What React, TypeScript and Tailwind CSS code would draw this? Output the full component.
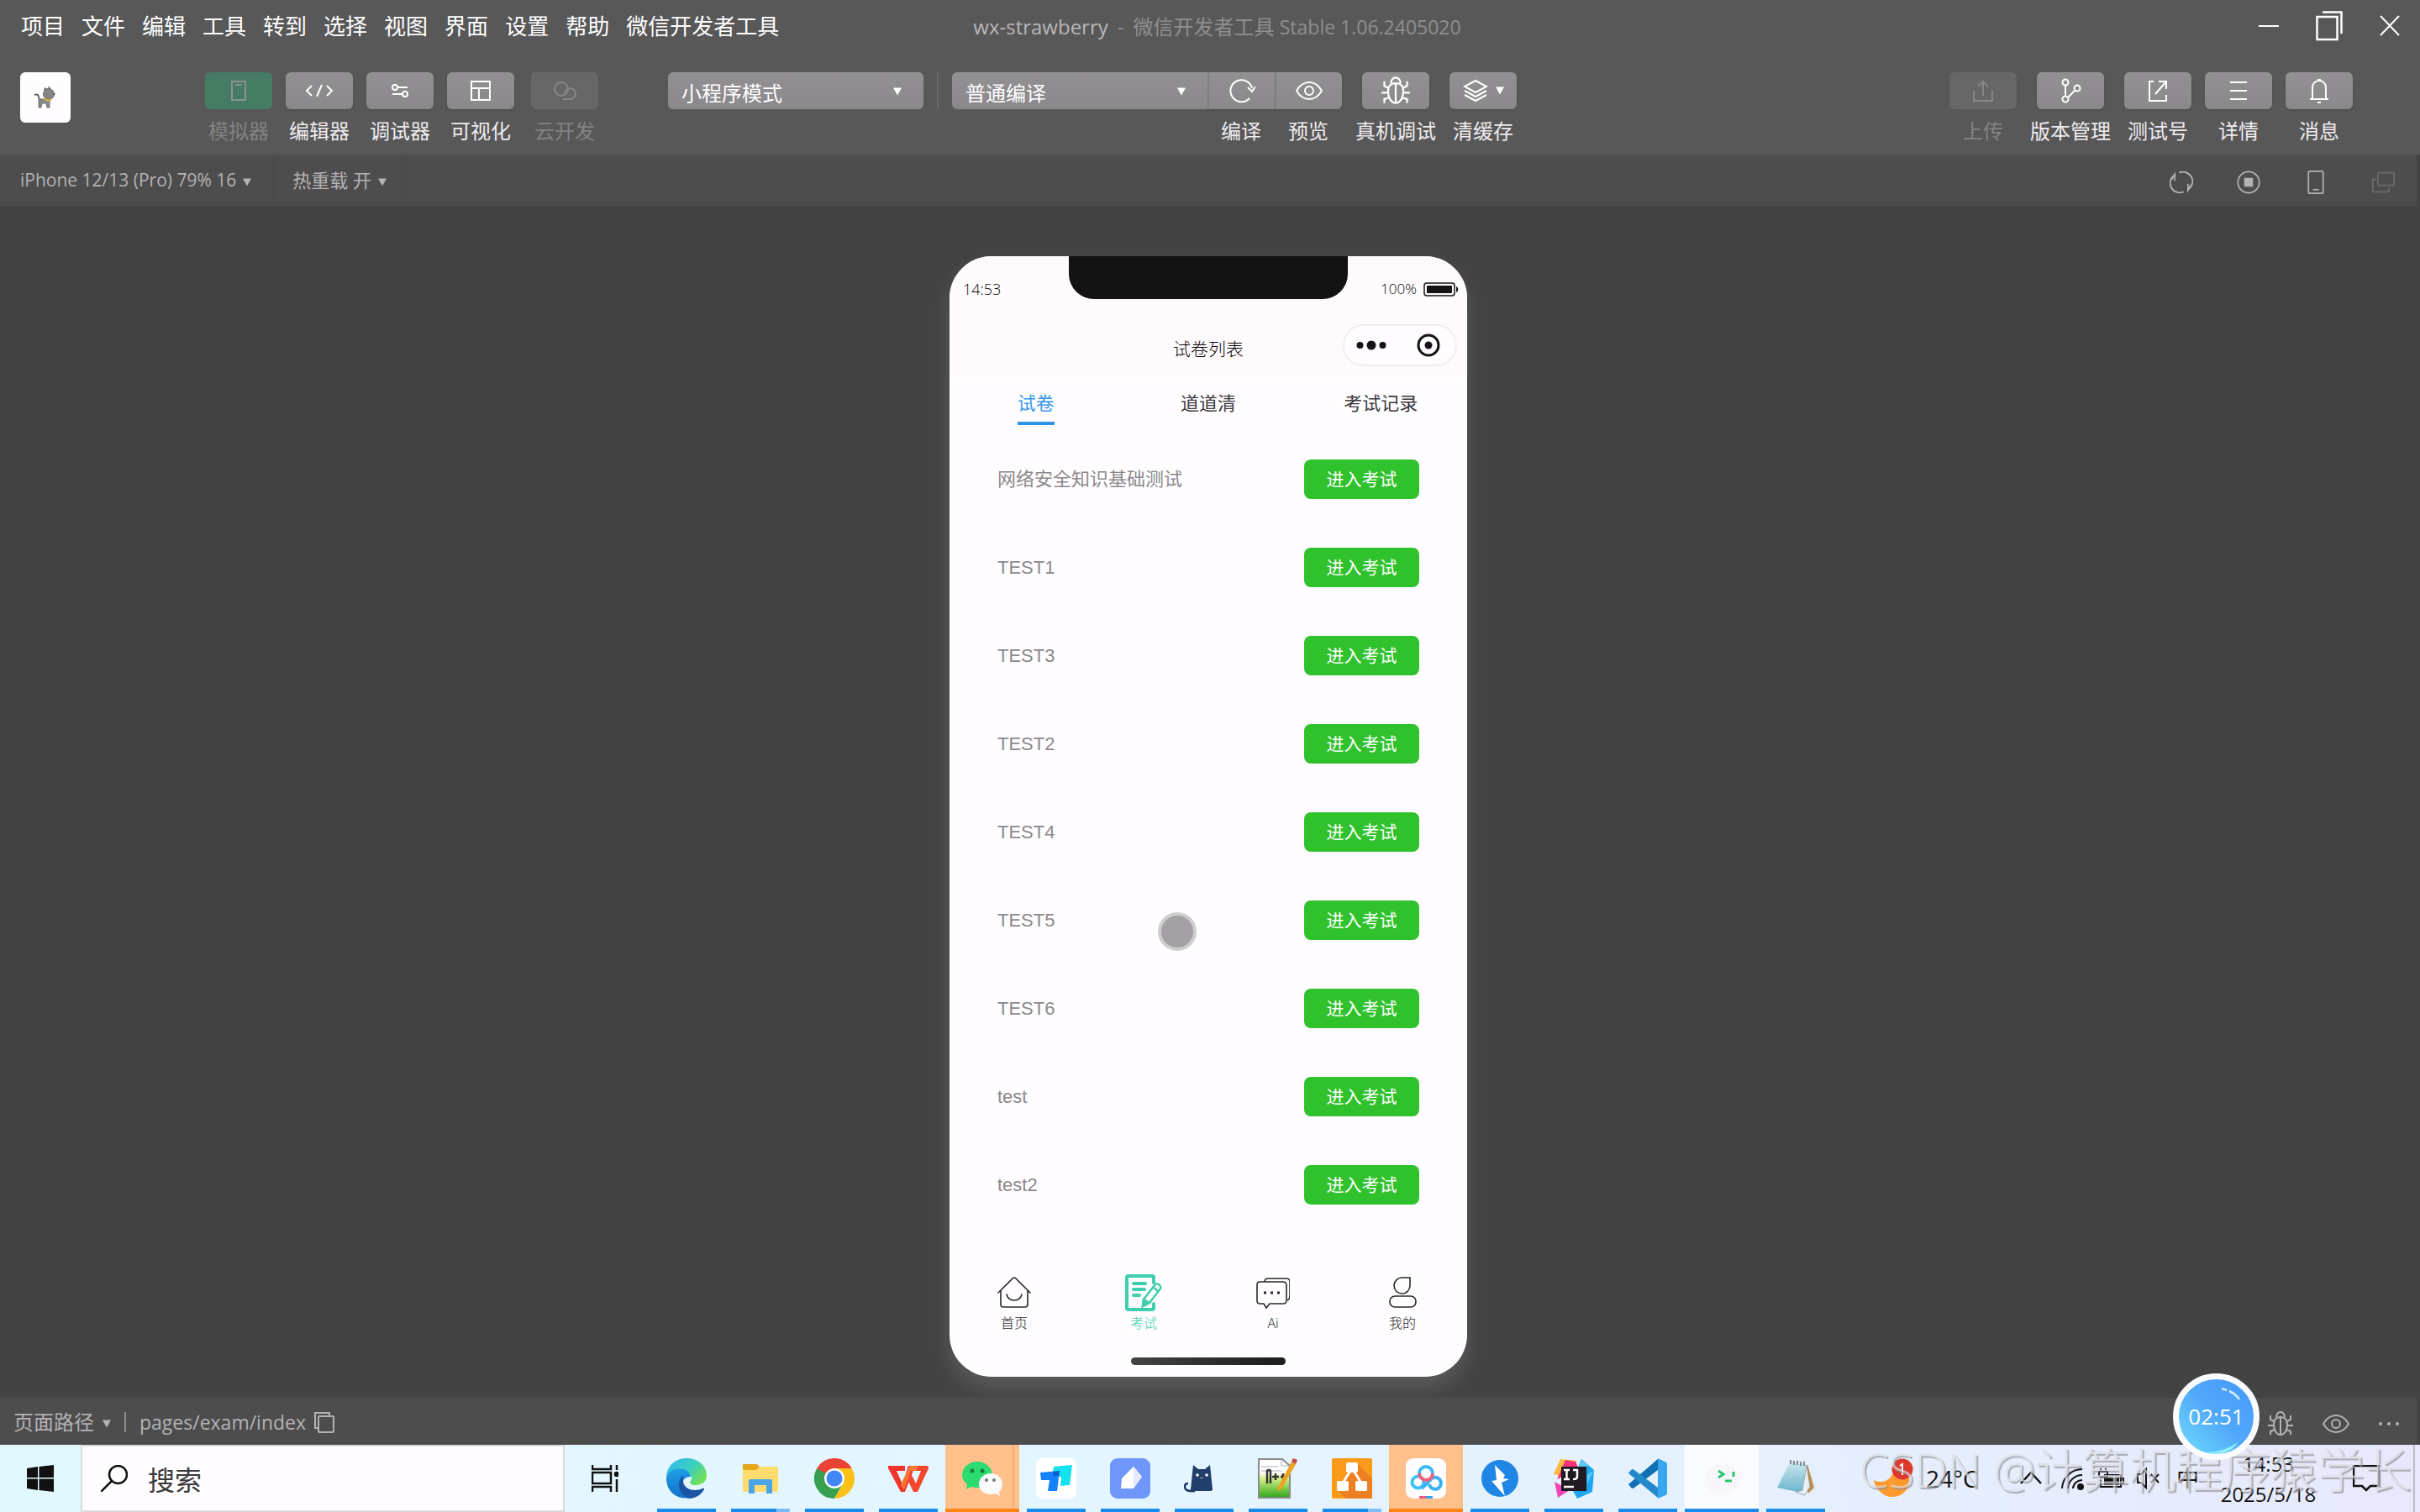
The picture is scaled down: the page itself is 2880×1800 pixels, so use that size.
import type { ReactNode } from "react";

const UI = "font-['Open_Sans','Noto_Sans_CJK_SC',sans-serif]";
const APP = "font-['Liberation_Sans','Noto_Sans_CJK_SC',sans-serif]";

const MENUS = ["项目", "文件", "编辑", "工具", "转到", "选择", "视图", "界面", "设置", "帮助", "微信开发者工具"];
const EXAMS = ["网络安全知识基础测试", "TEST1", "TEST3", "TEST2", "TEST4", "TEST5", "TEST6", "test", "test2"];

type SvgProps = { size?: string; box?: string; width?: number; className?: string; children: ReactNode };

function Line({ size = "w-8 h-8", box = "0 0 32 32", width = 2, className = "", children }: SvgProps) {
  return (
    <svg viewBox={box} className={`${size} ${className} shrink-0`} fill="none" stroke="currentColor" strokeWidth={width} aria-hidden="true">
      {children}
    </svg>
  );
}

function Caret({ className = "" }: { className?: string }) {
  return (
    <svg viewBox="0 0 11 10" className={`h-2.5 w-2.5 shrink-0 ${className}`} aria-hidden="true">
      <path d="M0 0h11L5.500 10z" fill="currentColor" />
    </svg>
  );
}

function Bug({ size = "w-8 h-8" }: { size?: string }) {
  return (
    <Line size={size}>
      <path d="M11 8a5 6 0 0 1 10 0M8 17c0-6 2-9 8-9s8 3 8 9-3 12-8 12-8-6-8-12zM16 8v21M8 13l-4-2V6M24 13l4-2V6M8 18H1M24 18h7M9 23l-5 2v4M23 23l5 2v4" />
    </Line>
  );
}

function Eye({ size = "w-8 h-8" }: { size?: string }) {
  return (
    <Line size={size}>
      <path d="M1 16C5 9 10 6 16 6s11 3 15 10c-4 7-9 10-15 10S5 23 1 16z" />
      <circle cx="16" cy="16" r="5" />
    </Line>
  );
}

const ic = {
  simulator: <Line><path d="M8 5h16v22H8zM12 9h8" /></Line>,
  code: <Line size="w-9 h-8" box="0 0 36 32"><path d="M9 10l-6 6 6 6M27 10l6 6-6 6M21 9l-6 14" /></Line>,
  debug: <Line><circle cx="10" cy="12" r="3" /><path d="M13 12h12M7 20h12" /><circle cx="22" cy="20" r="3" /></Line>,
  layout: <Line><path d="M5 5h22v22H5zM5 13h22M14 13v14" /></Line>,
  cloud: <Line><circle cx="12" cy="14" r="8" /><path d="M14 26h9a6.500 6.500 0 1 0-4-12l-4 5" /></Line>,
  compile: <Line><path d="M25 25A13 13 0 1 1 28 13M23 12l5 5 4-6" /></Line>,
  layers: <Line><path d="M16 4l13 7-13 7-13-7zM3 16l13 7 13-7M3 21l13 7 13-7" /></Line>,
  upload: <Line><path d="M5 16v12h22V16M16 22V5M10 11l6-6 6 6" /></Line>,
  branch: <Line><circle cx="10" cy="6" r="3.500" /><circle cx="10" cy="26" r="3.500" /><circle cx="24" cy="13" r="3.500" /><path d="M10 10v12M13 24l8-8" /></Line>,
  test: <Line><path d="M11 5H6v23h20v-7M13 20L26 5M17 5h9v9" /></Line>,
  menu: <Line><path d="M6 6h20M6 16h20M6 26h20" /></Line>,
  bell: <Line><path d="M5 26h22M8 26V12a8 8 0 0 1 16 0v14M14 3h4M14 30h4" /></Line>,
};

function Face({ children, tone, shape }: { children: ReactNode; tone: string; shape: string }) {
  const tones: Record<string, string> = {
    normal: "bg-linear-to-b from-[#929093] to-[#8a888b] text-white shadow-sm",
    active: "bg-[#467b64] text-[#8d9490]",
    off: "bg-[#676767] text-[#878787]",
  };
  return <span className={`flex h-11 w-20 items-center justify-center gap-2 ${shape} ${tones[tone]}`}>{children}</span>;
}

function Tool({ label, children, tone = "normal", shape = "rounded-md", className = "" }: { label: string; children: ReactNode; tone?: string; shape?: string; className?: string }) {
  return (
    <button type="button" className={`flex w-20 flex-col items-center gap-2 ${className}`}>
      <Face tone={tone} shape={shape}>{children}</Face>
      <span className={`text-[24px] leading-9 whitespace-nowrap ${tone === "normal" ? "text-[#efecef]" : "text-[#838383]"}`}>{label}</span>
    </button>
  );
}

function Picker({ label, value, shape = "rounded-md", className }: { label: string; value: string; shape?: string; className: string }) {
  return (
    <div className={`relative ${className}`}>
      <select aria-label={label} className={`h-11 w-full appearance-none bg-linear-to-b from-[#929093] to-[#8a888b] px-4 pt-1.5 text-[24px] leading-8 text-white ${shape}`}>
        <option>{value}</option>
      </select>
      <Caret className="pointer-events-none absolute top-[18px] right-[26px] text-white" />
    </div>
  );
}

function TitleBar() {
  return (
    <header className="flex h-[62px] items-center justify-between">
      <nav className="flex flex-1 items-center gap-5 pl-[25px] text-[26px] leading-9 text-white">
        {MENUS.map((m) => (
          <button type="button" key={m} className="whitespace-nowrap">{m}</button>
        ))}
      </nav>
      <h1 className="flex items-baseline gap-[11px] pt-0.5 pl-4 text-[24px] whitespace-nowrap text-[#8f8f8f]">
        <span className="text-[#b9b7b9]">wx-strawberry</span>
        <span>-</span>
        <span>微信开发者工具 <span className="text-[23px]">Stable 1.06.2405020</span></span>
      </h1>
      <div className="flex flex-1 items-center justify-end gap-11 pr-6 text-white">
        <button type="button" aria-label="最小化"><Line size="w-6 h-8" box="0 0 24 32"><path d="M0 16h24" /></Line></button>
        <button type="button" aria-label="还原"><Line size="w-8 h-10" box="0 0 32 40" width={2.5}><path d="M1.500 9h24v27h-24zM8 3.500h22.500V29" /></Line></button>
        <button type="button" aria-label="关闭"><Line size="w-6 h-7" box="0 0 24 28"><path d="M1 2l22 23M23 2L1 25" /></Line></button>
      </div>
    </header>
  );
}

function Logo() {
  return (
    <button type="button" aria-label="项目头像" className="flex size-15 items-center justify-center rounded-md bg-[#fffdff]">
      <svg viewBox="0 0 28 28" className="size-7" aria-hidden="true">
        <path d="M1 11c5-2 5 2 6 6" fill="none" stroke="#666" strokeWidth="2" />
        <path d="M6 16h13v10h-3l-1-5h-5l-1 5H6z" fill="#8d8b8c" stroke="#5a5859" strokeWidth=".8" />
        <path d="M12 6l1-4 4 2zM17 4l1-4 3 5z" fill="#777" />
        <circle cx="18" cy="10" r="6.500" fill="#868485" stroke="#5a5859" strokeWidth=".8" />
        <path d="M12 15c3 2 6 3 9 2" fill="none" stroke="#e3b941" strokeWidth="2" />
        <circle cx="24.500" cy="10" r="1" fill="#444" />
      </svg>
    </button>
  );
}

function Toolbar() {
  return (
    <div className="flex h-[122px] items-start pt-6 pr-20 pl-6">
      <Logo />
      <div className="ml-40 flex gap-4">
        <Tool label="模拟器" tone="active">{ic.simulator}</Tool>
        <Tool label="编辑器">{ic.code}</Tool>
        <Tool label="调试器">{ic.debug}</Tool>
        <Tool label="可视化">{ic.layout}</Tool>
        <Tool label="云开发" tone="off" className="ml-1">{ic.cloud}</Tool>
      </div>
      <Picker label="项目模式" value="小程序模式" className="ml-[83px] w-[304px]" />
      <span className="mx-4 h-11 w-0.5 bg-[#6c6c6c]" />
      <div className="flex">
        <Picker label="编译模式" value="普通编译" shape="rounded-l-md" className="w-[304px]" />
        <Tool label="编译" shape="border-l-2 border-[#7f7d80]">{ic.compile}</Tool>
        <Tool label="预览" shape="rounded-r-md border-l-2 border-[#7f7d80]"><Eye /></Tool>
      </div>
      <div className="ml-6 flex gap-6">
        <Tool label="真机调试"><Bug size="w-9 h-9" /></Tool>
        <Tool label="清缓存">{ic.layers}<Caret /></Tool>
      </div>
      <div className="ml-auto flex gap-4">
        <Tool label="上传" tone="off">{ic.upload}</Tool>
        <Tool label="版本管理" className="mx-2">{ic.branch}</Tool>
        <Tool label="测试号">{ic.test}</Tool>
        <Tool label="详情">{ic.menu}</Tool>
        <Tool label="消息">{ic.bell}</Tool>
      </div>
    </div>
  );
}

function SimulatorBar() {
  return (
    <div className="flex h-[61px] items-center border-r-4 border-[#434343] bg-[#4d4d4d] text-[22px] text-[#b4b2b4]">
      <button type="button" className="flex h-full items-center gap-2 border-r border-[#484848] pr-[26px] pl-6 text-[21px]">
        iPhone 12/13 (Pro) 79% 16 <Caret className="mt-1" />
      </button>
      <button type="button" className="flex h-full items-center gap-2 border-r border-[#484848] px-[22px]">
        热重载 开 <Caret className="mt-1" />
      </button>
      <div className="ml-auto flex items-center gap-13 pt-1 pr-[26px]">
        <button type="button" aria-label="刷新">
          <Line size="w-7 h-7"><path d="M13 3a13 13 0 0 1 12 23M19 29A13 13 0 0 1 7 6M7 14V5l-4 7M25 18v9l4-7" /></Line>
        </button>
        <button type="button" aria-label="停止">
          <Line size="w-7 h-7"><circle cx="16" cy="16" r="14.500" /><path d="M10 10h12v12H10z" fill="currentColor" stroke="none" /></Line>
        </button>
        <button type="button" aria-label="机型">
          <Line size="w-7 h-7"><rect x="6" y="1" width="20" height="30" rx="2" /><path d="M12 26h8" /></Line>
        </button>
        <button type="button" aria-label="分离窗口" className="text-[#6b6b6b]">
          <Line size="w-7 h-7"><rect x="9" y="3" width="22" height="17" rx="1" /><path d="M7 12H2v17h22v-6" /></Line>
        </button>
      </div>
    </div>
  );
}

function PhoneHeader() {
  return (
    <div className={`flex flex-col bg-[#fffbfd] font-light text-[#0a080a] ${UI}`}>
      <div className="flex h-[78px] items-center justify-between pr-2.5 pl-4 text-[18px]">
        <span>14:53</span>
        <span className="flex items-center gap-2 text-[17px]">
          100%
          <svg viewBox="0 0 42 17" className="h-[17px] w-[42px]" aria-hidden="true">
            <rect x="1" y="1" width="36" height="15" rx="3" fill="none" stroke="#161416" strokeWidth="1.500" />
            <rect x="4" y="4" width="30" height="9" rx="1" fill="#161416" />
            <path d="M39 5c3 1 3 6 0 7z" fill="#161416" />
          </svg>
        </span>
      </div>
      <div className="grid h-[65px] grid-cols-[1fr_auto_1fr] items-start px-3">
        <span />
        <h2 className="pt-4 text-[21px] leading-8">试卷列表</h2>
        <div className="mt-[3px] flex h-[50px] w-[136px] items-center justify-between justify-self-end rounded-full border-2 border-[#f1eff1] bg-[#fffdff] pr-4.5 pl-3.5">
          <button type="button" aria-label="更多">
            <svg viewBox="0 0 36 14" className="h-3.5 w-9" fill="#161416" aria-hidden="true">
              <circle cx="4.500" cy="7" r="4" /><circle cx="18" cy="7" r="5.500" /><circle cx="31.500" cy="7" r="4" />
            </svg>
          </button>
          <button type="button" aria-label="关闭小程序">
            <svg viewBox="0 0 28 28" className="size-7" aria-hidden="true">
              <circle cx="14" cy="14" r="12" fill="none" stroke="#161416" strokeWidth="3" />
              <circle cx="14" cy="14" r="4.500" fill="#161416" />
            </svg>
          </button>
        </div>
      </div>
    </div>
  );
}

function PhoneTabs() {
  return (
    <div role="tablist" className="grid h-[70px] grid-cols-3 items-start justify-items-center pt-[15px] text-[22px] leading-9 text-[#3c3a3c]">
      <button role="tab" aria-selected="true" className="border-b-4 border-[#2f93e8] pb-[3px] text-[#3498ee]">试卷</button>
      <button role="tab" aria-selected="false">道道清</button>
      <button role="tab" aria-selected="false">考试记录</button>
    </div>
  );
}

function PhoneNav() {
  const item = "flex flex-col items-center text-[16px] leading-6";
  return (
    <nav className={`grid grid-cols-4 font-light text-[#2a282a] ${UI}`}>
      <button type="button" className={item}>
        <span className="flex h-12 items-center">
          <Line size="w-10 h-10" box="0 0 40 40" width={1.6}>
            <path d="M1 20L18 3q2-2 4 0l17 17M4 18v16q0 3 3 3h26q3 0 3-3V18M11 22q2 7 9 7t9-7" strokeLinecap="round" />
          </Line>
        </span>
        首页
      </button>
      <button type="button" className={`${item} text-[#3fcfae]`}>
        <span className="flex h-12 items-center">
          <Line size="w-11 h-11" box="0 0 44 44" width={4}>
            <path d="M34 10V4q0-2-2-2H4Q2 2 2 4v36q0 2 2 2h28q2 0 2-2v-5M10 11h14M10 18h13M10 25h7" strokeLinecap="round" />
            <path d="M21 38l1-8 13-17q2-3 5-1t2 5L29 34z" strokeWidth="2.500" />
            <path d="M21 38l1-8 7 4zM33 15l6 5" strokeWidth="2.500" fill="currentColor" />
          </Line>
        </span>
        考试
      </button>
      <button type="button" className={item}>
        <span className="flex h-12 items-center">
          <Line size="w-10 h-10" box="0 0 40 40" width={1.6}>
            <path d="M4 7h28q4 0 4 4v18q0 4-4 4H16l-4 5-3-5H4q-3 0-3-4V11q0-4 3-4zM10 7q0-4 4-4h22q4 0 4 4v17q0 4-3 5" />
            <path d="M9 20h3M17 20h3M25 20h3" strokeWidth="3" />
          </Line>
        </span>
        Ai
      </button>
      <button type="button" className={item}>
        <span className="flex h-12 items-center">
          <Line size="w-10 h-10" box="0 0 40 40" width={1.6}>
            <path d="M29 2v9a9.500 9.500 0 1 1-9-9z" />
            <rect x="5" y="24" width="31" height="13" rx="6" />
          </Line>
        </span>
        我的
      </button>
    </nav>
  );
}

function Phone() {
  return (
    <section className={`relative flex w-[616px] flex-col overflow-hidden rounded-[50px] bg-[#fffdff] shadow-[0_14px_24px_rgba(255,255,255,0.13)] ${APP}`}>
      <div className="absolute top-0 left-1/2 h-[51px] w-[332px] -translate-x-1/2 rounded-b-[30px] bg-[#131313]" />
      <PhoneHeader />
      <PhoneTabs />
      <ul>
        {EXAMS.map((name) => (
          <li key={name} className="flex h-[105px] items-center justify-between pr-[57px] pl-[57px] text-[22px] text-[#8b898b]">
            {name}
            <button type="button" className="h-[47px] w-[137px] rounded-lg bg-[#30c22d] text-[21px] text-white">进入考试</button>
          </li>
        ))}
      </ul>
      <div className="mt-auto flex flex-col">
        <PhoneNav />
        <span className="mt-[29px] mb-3.5 h-[9px] w-[184px] self-center rounded-full bg-linear-to-r from-[#444] to-[#1c1c1c]" />
      </div>
      <span className="absolute top-[781px] left-[248px] size-[46px] rounded-full border-4 border-[#cfcdcf] bg-[#a3a1a3]" />
    </section>
  );
}

function StatusBar() {
  return (
    <footer className="relative flex h-14 items-center border-r-4 border-[#434343] bg-[#4d4d4d] pt-0.5 pr-5 pl-4 text-[24px] text-[#b4b2b4]">
      <button type="button" className="flex items-center gap-2.5">页面路径 <Caret className="mt-1" /></button>
      <span className="mx-4 h-6 w-0.5 bg-[#8f8f8f]" />
      <span className="text-[23px]">pages/exam/index</span>
      <button type="button" aria-label="复制路径" className="ml-2">
        <Line size="w-7 h-7" box="0 0 28 28"><path d="M6 21H3V3h17v3" /><rect x="7" y="7" width="18" height="19" rx="1" /></Line>
      </button>
      <div className="ml-auto flex items-center gap-[34px] pt-1">
        <button type="button" aria-label="调试"><Bug size="w-8 h-8" /></button>
        <button type="button" aria-label="预览"><Eye /></button>
        <button type="button" aria-label="更多">
          <svg viewBox="0 0 26 6" className="h-1.5 w-6.5" fill="currentColor" aria-hidden="true"><circle cx="3" cy="3" r="2" /><circle cx="13" cy="3" r="2" /><circle cx="23" cy="3" r="2" /></svg>
        </button>
      </div>
      <div className="absolute right-[187px] bottom-[-18px] z-10 flex size-[103px] items-center justify-center rounded-full border-[7px] border-[#fbfcff] bg-linear-to-bl from-[#4598fb] via-[#52a9fa] to-[#71dcfb] text-[26px] text-white">
        02:51
        <svg viewBox="0 0 89 89" className="absolute inset-0" fill="none" aria-hidden="true">
          <path d="M51 11l6 2M60 14q7 3 12 10" stroke="#cfeaff" strokeWidth="2.500" />
          <path d="M32 87q22 0 38-12-6 12-26 14z" fill="#8ff0fb" />
        </svg>
      </div>
    </footer>
  );
}

const APPS: { name: string; on?: boolean; stacked?: boolean; plain?: boolean; split?: boolean; art: ReactNode }[] = [
  {
    name: "Edge",
    art: (
      <>
        <defs>
          <linearGradient id="eg" x1="0" y1="0" x2="1" y2="0.6"><stop offset="0" stopColor="#2fb8ee" /><stop offset=".6" stopColor="#3ccfc0" /><stop offset="1" stopColor="#6fe05a" /></linearGradient>
          <linearGradient id="eb" x1="0" y1="0" x2="0" y2="1"><stop offset="0" stopColor="#1f9de8" /><stop offset="1" stopColor="#1272c8" /></linearGradient>
        </defs>
        <path d="M0 24C0 8 12 0 24 0c15 0 24 10 24 20 0 8-6 12-13 12-5 0-8-2-6-5 3-5-1-10-7-10C12 15 2 20 0 24z" fill="url(#eg)" />
        <path d="M0 24C2 14 12 11 20 13c6 1 9 6 9 9-8 0-11 6-9 13 1 6 6 10 10 12C14 50 0 41 0 24z" fill="url(#eb)" />
        <path d="M20 20c-8 6-7 24 8 28 8-1 14-5 17-11 0-1-1-2-2-1-11 5-23 0-23-9 0-3 0-5 0-7z" fill="#1b55a5" />
      </>
    ),
  },
  {
    name: "文件资源管理器",
    split: true,
    art: (
      <>
        <path d="M3 7h17l3 3-3 4H3z" fill="#e7a71c" />
        <path d="M3 14h16l4-4h20q2 0 2 2v26q0 2-2 2H5q-2 0-2-2z" fill="#ffdc6b" />
        <path d="M10 42V27q0-2 2-2h24q2 0 2 2v15h-7V32H17v10z" fill="#4aa5ea" />
      </>
    ),
  },
  {
    name: "Chrome",
    art: (
      <>
        <path d="M24 24L3.200 12A24 24 0 0 1 44.800 12z" fill="#ea4335" />
        <path d="M24 24v24A24 24 0 0 1 3.200 12z" fill="#34a050" />
        <path d="M24 12H3.200l10.400 18z" fill="#ea4335" />
        <path d="M3.200 12L13.600 30 24 48l10-18z" fill="#34a050" />
        <path d="M34.400 30L24 48a24 24 0 0 0 24-24 24 24 0 0 0-3.200-12H24z" fill="#fbc116" />
        <circle cx="24" cy="24" r="12" fill="#fff" /><circle cx="24" cy="24" r="9.500" fill="#4087f3" />
      </>
    ),
  },
  {
    name: "WPS",
    art: (
      <>
        <path d="M0 9h20v6H10l7 16 7-22h8L20 40h-5L0 12z" fill="#f0342c" />
        <path d="M24 9h22q2 0 2 3L35 40h-5l-7-15 4-7 6 12 6-15H29z" fill="#f4452d" />
        <path d="M26 9h10l-3 6h-6l-8 23-4-7z" fill="#f9762f" />
      </>
    ),
  },
  {
    name: "微信",
    on: true,
    stacked: true,
    art: (
      <>
        <path d="M18 4c10 0 18 7 18 16s-8 15-18 15q-4 0-7-1l-6 3 1-6C2 28 0 24 0 20 0 11 8 4 18 4z" fill="#2ddc70" />
        <circle cx="12" cy="15" r="2.500" fill="#157a3c" /><circle cx="24" cy="15" r="2.500" fill="#157a3c" />
        <path d="M34 18c8 0 14 6 14 13 0 4-2 7-4 9l1 5-5-3q-3 1-6 1c-8 0-14-5-14-12s6-13 14-13z" fill="#fafafa" />
        <circle cx="29" cy="26" r="2" fill="#777" /><circle cx="38" cy="26" r="2" fill="#777" />
      </>
    ),
  },
  {
    name: "腾讯文档",
    art: (
      <>
        <rect width="48" height="48" rx="8" fill="#fff" />
        <path d="M21 10l22-2-3 24-11 1 1-11H19z" fill="#14e2ee" />
        <path d="M5 17l23-2-3 24H14l2-13H6z" fill="#1482fa" />
        <path d="M20 16l8-1-1 6-7 0z" fill="#0b5fd0" />
      </>
    ),
  },
  {
    name: "笔记",
    art: (
      <>
        <rect width="48" height="48" rx="9" fill="#6f97fb" />
        <path d="M28 10l10 12-10 14-15 0 1-12z" fill="#fff" />
        <path d="M28 10l10 12-10 14z" fill="#e4eafc" />
      </>
    ),
  },
  {
    name: "Clash",
    art: (
      <>
        <path d="M13 39Q1 40 1 34q0-4 4-4" fill="none" stroke="#1d3a63" strokeWidth="2.500" />
        <path d="M11 8l6 5h8l6-5 3 29q0 2-3 2H11q-3 0-3-2z" fill="#223f6b" />
        <circle cx="16" cy="20" r="1.800" fill="#fff" /><circle cx="27" cy="20" r="1.800" fill="#fff" />
        <path d="M19 24l2-1 2 1" fill="none" stroke="#aab" />
      </>
    ),
  },
  {
    name: "Notepad++",
    art: (
      <>
        <defs><linearGradient id="np" x1="0" y1="0" x2="0" y2="1"><stop offset=".35" stopColor="#fff" /><stop offset=".5" stopColor="#d3f08a" /><stop offset="1" stopColor="#2fa516" /></linearGradient></defs>
        <path d="M1 1h28l9 8v38H1z" fill="url(#np)" stroke="#8b8b8b" strokeWidth="2" />
        <path d="M28 1v8h9M4 10h20M4 15h24" fill="none" stroke="#aab" />
        <path d="M11 30V16q0-2 2-2t2 2v14M17 22h8M21 18v8M27 22h6M30 18v8" fill="none" stroke="#333" strokeWidth="2.500" />
        <path d="M40 4l5 3-17 30-4 2 0-5z" fill="#eda321" /><path d="M40 4l2-4 5 2-2 5z" fill="#c1494a" />
      </>
    ),
  },
  {
    name: "draw.io",
    split: true,
    art: (
      <>
        <rect width="48" height="48" rx="2" fill="#fb9a1b" />
        <path d="M31 7l17 17v24H17L7 38z" fill="#ee8022" />
        <path d="M22 15l-10 16M26 15l10 16" stroke="#fff" strokeWidth="3" />
        <rect x="17" y="5" width="14" height="12" rx="2" fill="#fff" /><rect x="6" y="27" width="14" height="12" rx="2" fill="#fff" /><rect x="28" y="27" width="14" height="12" rx="2" fill="#fff" />
      </>
    ),
  },
  {
    name: "百度网盘",
    on: true,
    art: (
      <>
        <rect width="48" height="48" rx="9" fill="#fffdff" />
        <circle cx="14.500" cy="28.500" r="7" fill="none" stroke="#3cc3f5" strokeWidth="4" />
        <path d="M28 31a7 7 0 1 0 1-5L19 36" fill="none" stroke="#3cb0f5" strokeWidth="4" />
        <path d="M16 18a8 8 0 0 1 16 0" fill="none" stroke="#3cb8f5" strokeWidth="4" /><path d="M16 18a8 8 0 0 0 16 0" fill="none" stroke="#f4627f" strokeWidth="4" />
        <path d="M16 45h8v3h-8z" fill="#f05a78" /><path d="M24 45h8v3h-8z" fill="#3ba0f5" />
      </>
    ),
  },
  {
    name: "迅雷",
    art: (
      <>
        <circle cx="24" cy="24" r="22" fill="#1f86e6" />
        <path d="M18 8l12 12-2 4 7 1-9 4 4 16-16-18 6-1z" fill="#fff" />
      </>
    ),
  },
  {
    name: "IntelliJ IDEA",
    art: (
      <>
        <path d="M8 1l20 2-12 20-16-4z" fill="#fdb83e" /><path d="M14 2l12 2 4 9-26 12z" fill="#f9317d" />
        <path d="M33 1l15 13-2 26-18 8-8-14z" fill="#1ea7ee" /><path d="M33 1l8 8-12 4zM48 14l-8 6v10z" fill="#5bc9f5" />
        <path d="M1 28l18 10-14 9z" fill="#f545b6" />
        <rect x="9" y="10" width="30" height="29" fill="#221a22" />
        <path d="M12 14h7M15.500 14v11M12 25h7M23 14h5v8q0 3-5 3" fill="none" stroke="#fff" strokeWidth="2.500" /><path d="M12 34h12" stroke="#fff" strokeWidth="2.500" />
      </>
    ),
  },
  {
    name: "VS Code",
    art: (
      <>
        <path d="M1 31l3 4q2 2 4 0l28-21V1L1 31z" fill="#1070b3" />
        <path d="M1 18l3-4q2-2 4 0l28 21v12z" fill="#2489ca" />
        <path d="M36 0l10 5q1 1 1 2v34q0 2-2 3l-9 4z" fill="#36a6ee" />
      </>
    ),
  },
  {
    name: "微信开发者工具",
    plain: true,
    art: (
      <>
        <path d="M24 6a21 18 0 1 1-10 33l-6 4 1-8A20 18 0 0 1 24 6z" fill="#f8f6f9" />
        <path d="M20 15l6 4-6 4M28 27h8M38 16v6" fill="none" stroke="#28c76f" strokeWidth="3" />
      </>
    ),
  },
  {
    name: "记事本",
    art: (
      <>
        <defs><linearGradient id="pad" x1="0" y1="0" x2="0" y2="1"><stop offset="0" stopColor="#c9e7ee" /><stop offset="1" stopColor="#69b3c9" /></linearGradient></defs>
        <path d="M38 7l8 28-6 6-5-3z" fill="#b98f4c" />
        <path d="M17 5l20 3-6 33L2 35z" fill="url(#pad)" />
        <path d="M37 8l4 26-6 10-11-4 8-2z" fill="#e8eef2" stroke="#8a98a0" strokeWidth=".8" />
        <path d="M18 2v5M22 3v5M26 3v5M30 4v5M34 4v5" stroke="#667" strokeWidth="1.500" />
      </>
    ),
  },
];

function Tray() {
  return (
    <div className="relative ml-auto flex h-full items-center border-r-2 border-[#b8bac6] pr-10 text-[#111]">
      <svg viewBox="0 0 48 48" className="size-12" aria-hidden="true">
        <path d="M0 26c12 6 22-2 24-12l18 8c3 14-8 24-20 24C10 46 2 36 0 26z" fill="#ff9a2e" />
        <circle cx="34" cy="13" r="12.500" fill="#dc3a2c" />
        <path d="M31 9l3-2v13" fill="none" stroke="#fff" strokeWidth="2" />
      </svg>
      <span className="ml-3.5 w-[62px] text-[28px] whitespace-nowrap">24°C</span>
      <Line size="w-6.5 h-6.5" className="ml-[50px]" box="0 0 26 26" width={2.5}><path d="M1 19L13 6l12 13" /></Line>
      <Line size="w-7 h-7" className="ml-[22px]" box="0 0 28 28"><path d="M2 26A24 24 0 0 1 26 3M9 26A17 17 0 0 1 26 10M15 26a11 11 0 0 1 11-10" /><circle cx="24" cy="24" r="3" fill="currentColor" /></Line>
      <Line size="w-8 h-8" className="ml-4"><path d="M8 12h20v14H4v-8M2 8h10v6H2zM4 8V4M10 8V4M28 16h3v6h-3" /><path d="M9 16h16v7H9z" fill="currentColor" /></Line>
      <Line size="w-7.5 h-7.5" className="ml-3.5" box="0 0 30 30"><path d="M2 10h4l6-6v22l-6-6H2zM18 10l9 10M27 10l-9 10" /></Line>
      <span className="ml-4.5 w-[27px] text-[27px]">中</span>
      <div className="ml-6 flex w-[117px] flex-col items-center pt-0.5 text-[24px] leading-9 whitespace-nowrap">
        <span>14:53</span>
        <span>2025/5/18</span>
      </div>
      <button type="button" aria-label="通知" className="ml-[42px]">
        <Line size="w-8 h-8" width={2.5}><path d="M1 1h30v24H21l-5 5-5-5H1z" /></Line>
      </button>
      <span className="pointer-events-none absolute -top-1 right-0.5 text-[56px] leading-[66px] font-light whitespace-nowrap text-[#dcdde1] opacity-70 [text-shadow:2px_2px_1px_#8d8f96]">
        CSDN @计算机程序猿学长
      </span>
    </div>
  );
}

function Taskbar() {
  return (
    <div className="flex h-20 items-center bg-linear-to-r from-[#e2f8ff] via-[#e4f5ff] via-50% to-[#e7e9fb] pr-1.5">
      <button type="button" aria-label="开始" className="flex w-24 justify-center">
        <svg viewBox="0 0 32 32" className="size-8" fill="#111" aria-hidden="true"><path d="M0 4l13-2v13H0zM14.500 2L32 0v15H14.500zM0 16.500h13V30L0 28zM14.500 16.500H32V32l-17.500-2z" /></svg>
      </button>
      <label className="flex h-full w-[576px] items-center gap-6 border-2 border-[#dbd9db] bg-[#fffdff] pl-[22px] text-[#111]">
        <Line width={2.5}><circle cx="20.500" cy="11.500" r="10.500" /><path d="M13 19L0 32" /></Line>
        <input type="text" aria-label="搜索" placeholder="搜索" className="w-full pt-1 text-[32px] leading-10 outline-none placeholder:text-[#3a383a]" />
      </label>
      <button type="button" aria-label="任务视图" className="mr-[5px] flex w-24 justify-center text-[#111]">
        <Line size="w-8 h-8" width={2.5}><path d="M1 0v5h22V0M1 9h22v13H1zM1 32v-6h22v6M30 0v6M30 17v15" /><circle cx="30" cy="11" r="2" fill="currentColor" /></Line>
      </button>
      {APPS.map((a) => (
        <button type="button" key={a.name} aria-label={a.name} className={`relative flex h-full w-22 flex-col items-center ${a.on ? "bg-[#ffc08c]" : a.plain ? "bg-[#fafbff]" : ""}`}>
          {a.stacked && <span className="absolute top-0 right-1.5 bottom-1 w-0.5 bg-[#f0ab75]" />}
          <svg viewBox="0 0 48 48" className="mt-4 size-12" aria-hidden="true">{a.art}</svg>
          <span className={`mt-auto flex h-1 justify-end ${a.on ? "w-full bg-[#ff8413]" : a.plain ? "w-full bg-[#178cee]" : "w-[70px] bg-[#178cee]"}`}>
            {a.split && <span className="w-4 bg-[#7dbdf8]" />}
          </span>
        </button>
      ))}
      <Tray />
    </div>
  );
}

export default function App() {
  return (
    <div className={`flex min-h-screen flex-col bg-[#434343] ${UI}`}>
      <div className="bg-[#585858]">
        <TitleBar />
        <Toolbar />
      </div>
      <SimulatorBar />
      <main className="flex flex-1 justify-center pt-15 pr-1 pb-[25px]">
        <Phone />
      </main>
      <StatusBar />
      <Taskbar />
    </div>
  );
}
